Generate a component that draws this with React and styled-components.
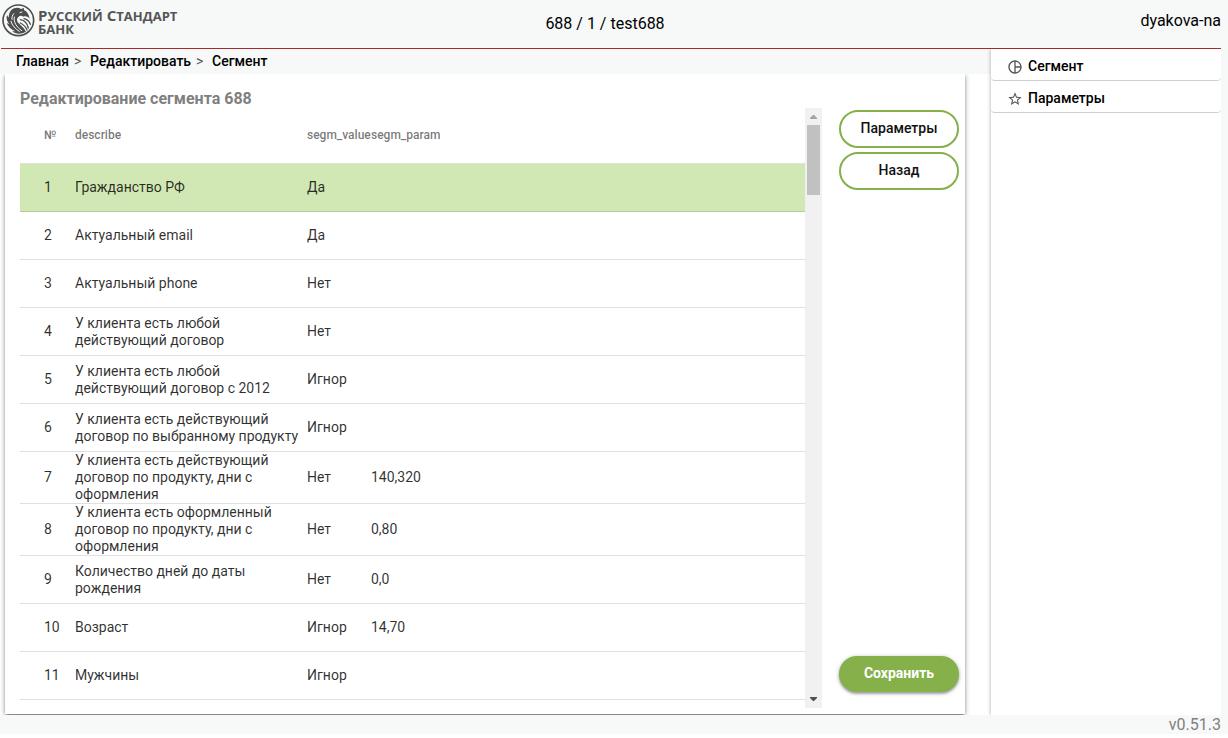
import React from "react";
import styled, { createGlobalStyle } from "styled-components";
import { MdPieChartOutline, MdStarBorder } from "react-icons/md";

const GlobalStyle = createGlobalStyle`
  *, *::before, *::after { box-sizing: border-box; }
  body {
    margin: 0;
    background: #fff;
    font-family: Roboto, "Liberation Sans", sans-serif;
    color: #000;
  }
`;

const Page = styled.div`
  display: flex;
  flex-direction: column;
  height: calc(100vh - 4px);
  padding-right: 7px;
  background: #f7f9f8;
`;

const Header = styled.header`
  display: grid;
  grid-template-columns: 1fr auto 1fr;
  align-items: start;
  height: 49px;
  margin-left: 1px;
  border-bottom: 1px solid #a52a2a;
  font-size: 16px;
  line-height: 20px;
`;

const Brand = styled.a`
  display: flex;
  gap: 3px;
  padding: 4px 0 0 1px;
  color: #555;
  text-decoration: none;
`;

const BrandName = styled.span`
  display: flex;
  flex-direction: column;
  padding-top: 5px;
  font-family: "Open Sans", "Noto Sans", sans-serif;
  font-size: 13px;
  font-weight: 700;
  line-height: 13px;
  text-transform: uppercase;
  white-space: nowrap;
`;

const BrandWords = styled.span`
  display: flex;
  gap: 4px;
`;

const BrandWord = styled.span`
  display: block;
  &::first-letter { font-size: ${(p) => (p.$capital ? "15px" : "13px")}; }
`;

const Campaign = styled.div`
  padding: 14px 12px 0 0;
`;

const User = styled.div`
  padding-top: 11px;
  text-align: right;
`;

const Body = styled.div`
  display: flex;
  flex: 1;
  min-height: 0;
`;

const Content = styled.main`
  display: flex;
  flex: 1;
  flex-direction: column;
  min-width: 0;
`;

const Breadcrumbs = styled.nav`
  display: flex;
  gap: 5px;
  height: 25px;
  padding-left: 16px;
  font-size: 14px;
  font-weight: 500;
  line-height: 24px;
`;

const Crumb = styled.a`
  color: #000;
  text-decoration: none;
`;

const Separator = styled.span`
  width: 11px;
  color: #555;
  font-size: 14px;
  font-weight: 400;
`;

const CardArea = styled.div`
  display: flex;
  flex: 1;
  min-height: 0;
  padding: 0 26px 1px 5px;
  overflow: hidden;
  background: #fff;
`;

const Card = styled.section`
  display: flex;
  flex: 1;
  flex-direction: column;
  min-width: 0;
  padding: 15px 6px 6px 15px;
  background: #fff;
  box-shadow: 0 3px 1px -2px rgba(0, 0, 0, 0.2), 0 2px 2px 0 rgba(0, 0, 0, 0.14),
    0 1px 5px 0 rgba(0, 0, 0, 0.4);
`;

const CardTitle = styled.h1`
  margin: 0;
  color: #808080;
  font-size: 16px;
  font-weight: 700;
  line-height: 19px;
`;

const CardBody = styled.div`
  display: flex;
  flex: 1;
  min-height: 0;
`;

const TableScroll = styled.div`
  flex: 1;
  min-width: 0;
  overflow: auto;
  scrollbar-width: none;
`;

const Table = styled.table`
  width: 100%;
  table-layout: fixed;
  border-spacing: 0;
  text-align: left;
`;

const Col = styled.col`
  width: ${(p) => (p.$width ? `${p.$width}px` : "auto")};
`;

const HeadCell = styled.th`
  height: 56px;
  padding: 0 0 2px;
  border-bottom: 1px solid rgba(0, 0, 0, 0.12);
  color: rgba(0, 0, 0, 0.54);
  font-size: 12px;
  font-weight: 500;
  white-space: nowrap;
  &:first-child { padding-left: 24px; }
`;

const Row = styled.tr`
  background: ${(p) => (p.$selected ? "#d2e8b4" : "transparent")};
`;

const Cell = styled.td`
  height: 48px;
  padding: 0;
  border-bottom: 1px solid rgba(0, 0, 0, 0.12);
  color: rgba(0, 0, 0, 0.82);
  font-size: 14px;
  line-height: 17px;
  &:first-child { padding-left: 24px; }
  &:nth-child(2) { padding-right: 6px; }
`;

const ScrollTrack = styled.div`
  display: flex;
  flex-direction: column;
  align-items: center;
  width: 17px;
  background: #f1f1f1;
`;

const ScrollThumb = styled.div`
  width: 13px;
  height: 70px;
  margin-bottom: auto;
  background: #c1c1c1;
`;

const Actions = styled.div`
  display: flex;
  flex-direction: column;
  gap: 4px;
  width: 120px;
  margin-left: 17px;
  padding: 2px 0 16px;
`;

const Button = styled.button`
  height: ${(p) => (p.$primary ? "36px" : "38px")};
  margin-top: ${(p) => (p.$primary ? "auto" : "0")};
  padding: 0 0 2px;
  border: ${(p) => (p.$primary ? "0" : "2px solid #85b04a")};
  border-radius: 19px;
  background: ${(p) => (p.$primary ? "#85b04a" : "#fff")};
  box-shadow: ${(p) =>
    p.$primary ? "0 1px 4px rgba(0, 0, 0, 0.3), 0 2px 2px rgba(0, 0, 0, 0.2)" : "none"};
  color: ${(p) => (p.$primary ? "#fff" : "#111")};
  font: ${(p) => (p.$primary ? 700 : 500)} 14px Roboto, sans-serif;
`;

const Sidebar = styled.nav`
  width: 230px;
  background: #fff;
  box-shadow: -1px 0 3px rgba(0, 0, 0, 0.22);
  clip-path: inset(0 0 0 -6px);
`;

const SideLink = styled.a`
  display: flex;
  gap: 5px;
  align-items: center;
  height: 32px;
  padding: 2px 16px 0;
  border-bottom: 1px solid #d0d0d0;
  border-radius: 4px;
  color: #000;
  font-size: 14px;
  font-weight: 500;
  text-decoration: none;
  svg { margin-top: 2px; color: #555; }
`;

const Footer = styled.footer`
  height: 19px;
  color: #808080;
  font-size: 16px;
  line-height: 19px;
  text-align: right;
`;

const ROWS = [
  ["Гражданство РФ", "Да", ""],
  ["Актуальный email", "Да", ""],
  ["Актуальный phone", "Нет", ""],
  ["У клиента есть любой действующий договор", "Нет", ""],
  ["У клиента есть любой действующий договор с 2012", "Игнор", ""],
  ["У клиента есть действующий договор по выбранному продукту", "Игнор", ""],
  ["У клиента есть действующий договор по продукту, дни с оформления", "Нет", "140,320"],
  ["У клиента есть оформленный договор по продукту, дни с оформления", "Нет", "0,80"],
  ["Количество дней до даты рождения", "Нет", "0,0"],
  ["Возраст", "Игнор", "14,70"],
  ["Мужчины", "Игнор", ""],
];

function Emblem() {
  return (
    <svg width="33" height="33" viewBox="0 0 99 99" aria-hidden="true">
      <circle cx="49" cy="49" r="46" fill="#f7f9f8" stroke="#4d4d4d" strokeWidth="5" />
      <path
        fill="#4d4d4d"
        d="M28 18 C36 11 49 9 57 15 L66 12 L66 18 C75 22 81 31 83 44 C77 37 70 36 64 38 C59 34 53 35 49 39 C43 44 44 52 50 58 C58 66 68 74 72 83 C59 91 41 91 30 82 L40 82 C27 76 18 68 14 57 L22 61 C14 51 12 41 15 33 L20 41 C20 31 23 23 28 18Z"
      />
      <g fill="none" stroke="#f7f9f8" strokeWidth="3" strokeLinecap="round">
        <path d="M37 39 C34 55 43 68 59 80" />
        <path d="M27 52 C30 64 39 74 52 82" />
        <path d="M35 29 C31 34 29 40 30 46" />
        <path d="M54 26 L60 24" />
      </g>
      <g fill="none" stroke="#4d4d4d" strokeWidth="4" strokeLinecap="round">
        <path d="M55 47 C67 49 76 59 79 72" />
        <path d="M66 44 C75 46 82 53 85 61" />
        <path d="M55 57 C65 62 72 70 75 78" />
      </g>
    </svg>
  );
}

const Arrow = ({ down }) => (
  <svg width="17" height="17" viewBox="0 0 17 17" aria-hidden="true">
    <path d={down ? "M5 6h7v1l-3 3h-1l-3-3z" : "M5 11h7v-1l-3-3h-1l-3 3z"} fill={down ? "#505050" : "#a3a3a3"} />
  </svg>
);

export default function App() {
  return (
    <Page>
      <GlobalStyle />
      <Header>
        <Brand href="#">
          <Emblem />
          <BrandName>
            <BrandWords>
              <BrandWord $capital>Русский</BrandWord>
              <BrandWord $capital>Стандарт</BrandWord>
            </BrandWords>
            <BrandWord>Банк</BrandWord>
          </BrandName>
        </Brand>
        <Campaign>688 / 1 / test688</Campaign>
        <User>dyakova-na</User>
      </Header>
      <Body>
        <Content>
          <Breadcrumbs>
            <Crumb href="#">Главная</Crumb>
            <Separator>&gt;</Separator>
            <Crumb href="#">Редактировать</Crumb>
            <Separator>&gt;</Separator>
            <Crumb href="#">Сегмент</Crumb>
          </Breadcrumbs>
          <CardArea>
            <Card>
              <CardTitle>Редактирование сегмента 688</CardTitle>
              <CardBody>
                <TableScroll>
                  <Table>
                    <colgroup>
                      <Col $width={55} />
                      <Col $width={232} />
                      <Col $width={64} />
                      <Col />
                    </colgroup>
                    <thead>
                      <tr>
                        <HeadCell>№</HeadCell>
                        <HeadCell>describe</HeadCell>
                        <HeadCell>segm_value</HeadCell>
                        <HeadCell>segm_param</HeadCell>
                      </tr>
                    </thead>
                    <tbody>
                      {ROWS.map(([describe, value, param], i) => (
                        <Row key={describe} $selected={i === 0}>
                          <Cell>{i + 1}</Cell>
                          <Cell>{describe}</Cell>
                          <Cell>{value}</Cell>
                          <Cell>{param}</Cell>
                        </Row>
                      ))}
                    </tbody>
                  </Table>
                </TableScroll>
                <ScrollTrack>
                  <Arrow />
                  <ScrollThumb />
                  <Arrow down />
                </ScrollTrack>
                <Actions>
                  <Button type="button">Параметры</Button>
                  <Button type="button">Назад</Button>
                  <Button type="button" $primary>Сохранить</Button>
                </Actions>
              </CardBody>
            </Card>
          </CardArea>
        </Content>
        <Sidebar>
          <SideLink href="#">
            <MdPieChartOutline size={16} />
            Сегмент
          </SideLink>
          <SideLink href="#">
            <MdStarBorder size={16} />
            Параметры
          </SideLink>
        </Sidebar>
      </Body>
      <Footer>v0.51.3</Footer>
    </Page>
  );
}
